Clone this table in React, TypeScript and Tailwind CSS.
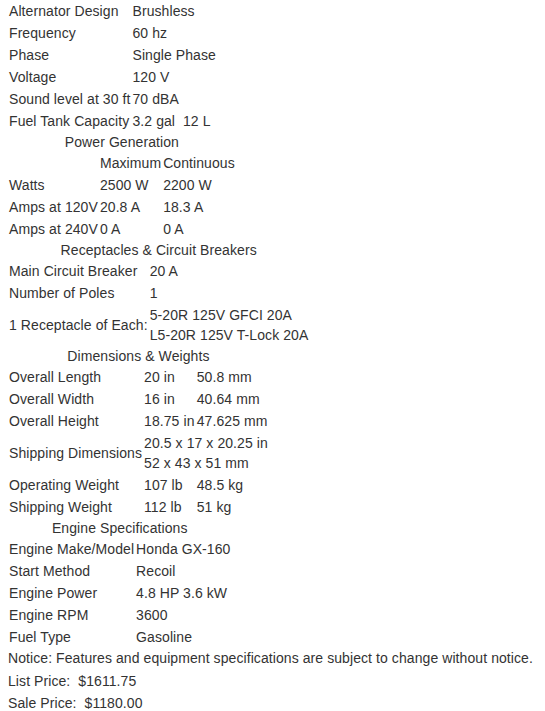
import React from 'react';

const cell = 'p-px align-middle text-left whitespace-nowrap';

type Row = React.ReactNode[];

// cols = column count of the table; a short row lets its last cell span the rest
const Spec: React.FC<{ title?: string; rows: Row[]; cols?: number }> = ({ title, rows, cols = 2 }) => (
  <table>
    {title && <caption className="text-center leading-5">{title}</caption>}
    <tbody>
      {rows.map((r, i) => (
        <tr key={i}>
          {r.map((c, j) => (
            <td key={j} className={cell} colSpan={j === r.length - 1 ? cols - r.length + 1 : 1}>
              {c}
            </td>
          ))}
        </tr>
      ))}
    </tbody>
  </table>
);

const App: React.FC = () => {
  return (
    <div className="px-2 text-[14px] leading-5 tracking-[0.08px] text-[#333] bg-white font-['Liberation_Sans',Arial,sans-serif]">
      <Spec
        rows={[
          ['Alternator Design', 'Brushless'],
          ['Frequency', '60 hz'],
          ['Phase', 'Single Phase'],
          ['Voltage', '120 V'],
          ['Sound level at 30 ft', '70 dBA'],
          ['Fuel Tank Capacity', '3.2 gal\u00a0 12 L'],
        ]}
      />
      <Spec
        title="Power Generation"
        cols={3}
        rows={[
          ['', 'Maximum', 'Continuous'],
          ['Watts', '2500 W', '2200 W'],
          ['Amps at 120V', '20.8 A', '18.3 A'],
          ['Amps at 240V', '0 A', '0 A'],
        ]}
      />
      <Spec
        title="Receptacles & Circuit Breakers"
        rows={[
          ['Main Circuit Breaker', '20 A'],
          ['Number of Poles', '1'],
          [
            '1 Receptacle of Each:',
            <>
              5-20R 125V GFCI 20A
              <br />
              L5-20R 125V T-Lock 20A
            </>,
          ],
        ]}
      />
      <Spec
        title="Dimensions & Weights"
        cols={3}
        rows={[
          ['Overall Length', '20 in', '50.8 mm'],
          ['Overall Width', '16 in', '40.64 mm'],
          ['Overall Height', '18.75 in', '47.625 mm'],
          [
            'Shipping Dimensions',
            <>
              20.5 x 17 x 20.25 in
              <br />
              52 x 43 x 51 mm
            </>,
          ],
          ['Operating Weight', '107 lb', '48.5 kg'],
          ['Shipping Weight', '112 lb', '51 kg'],
        ]}
      />
      <Spec
        title="Engine Specifications"
        rows={[
          ['Engine Make/Model', 'Honda GX-160'],
          ['Start Method', 'Recoil'],
          ['Engine Power', '4.8 HP 3.6 kW'],
          ['Engine RPM', '3600'],
          ['Fuel Type', 'Gasoline'],
        ]}
      />
      <div>Notice: Features and equipment specifications are subject to change without notice.</div>
      <div className="pt-[3px] pb-px">List Price:&nbsp; $1611.75</div>
      <div className="py-px">Sale Price:&nbsp; $1180.00</div>
    </div>
  );
};

export default App;
